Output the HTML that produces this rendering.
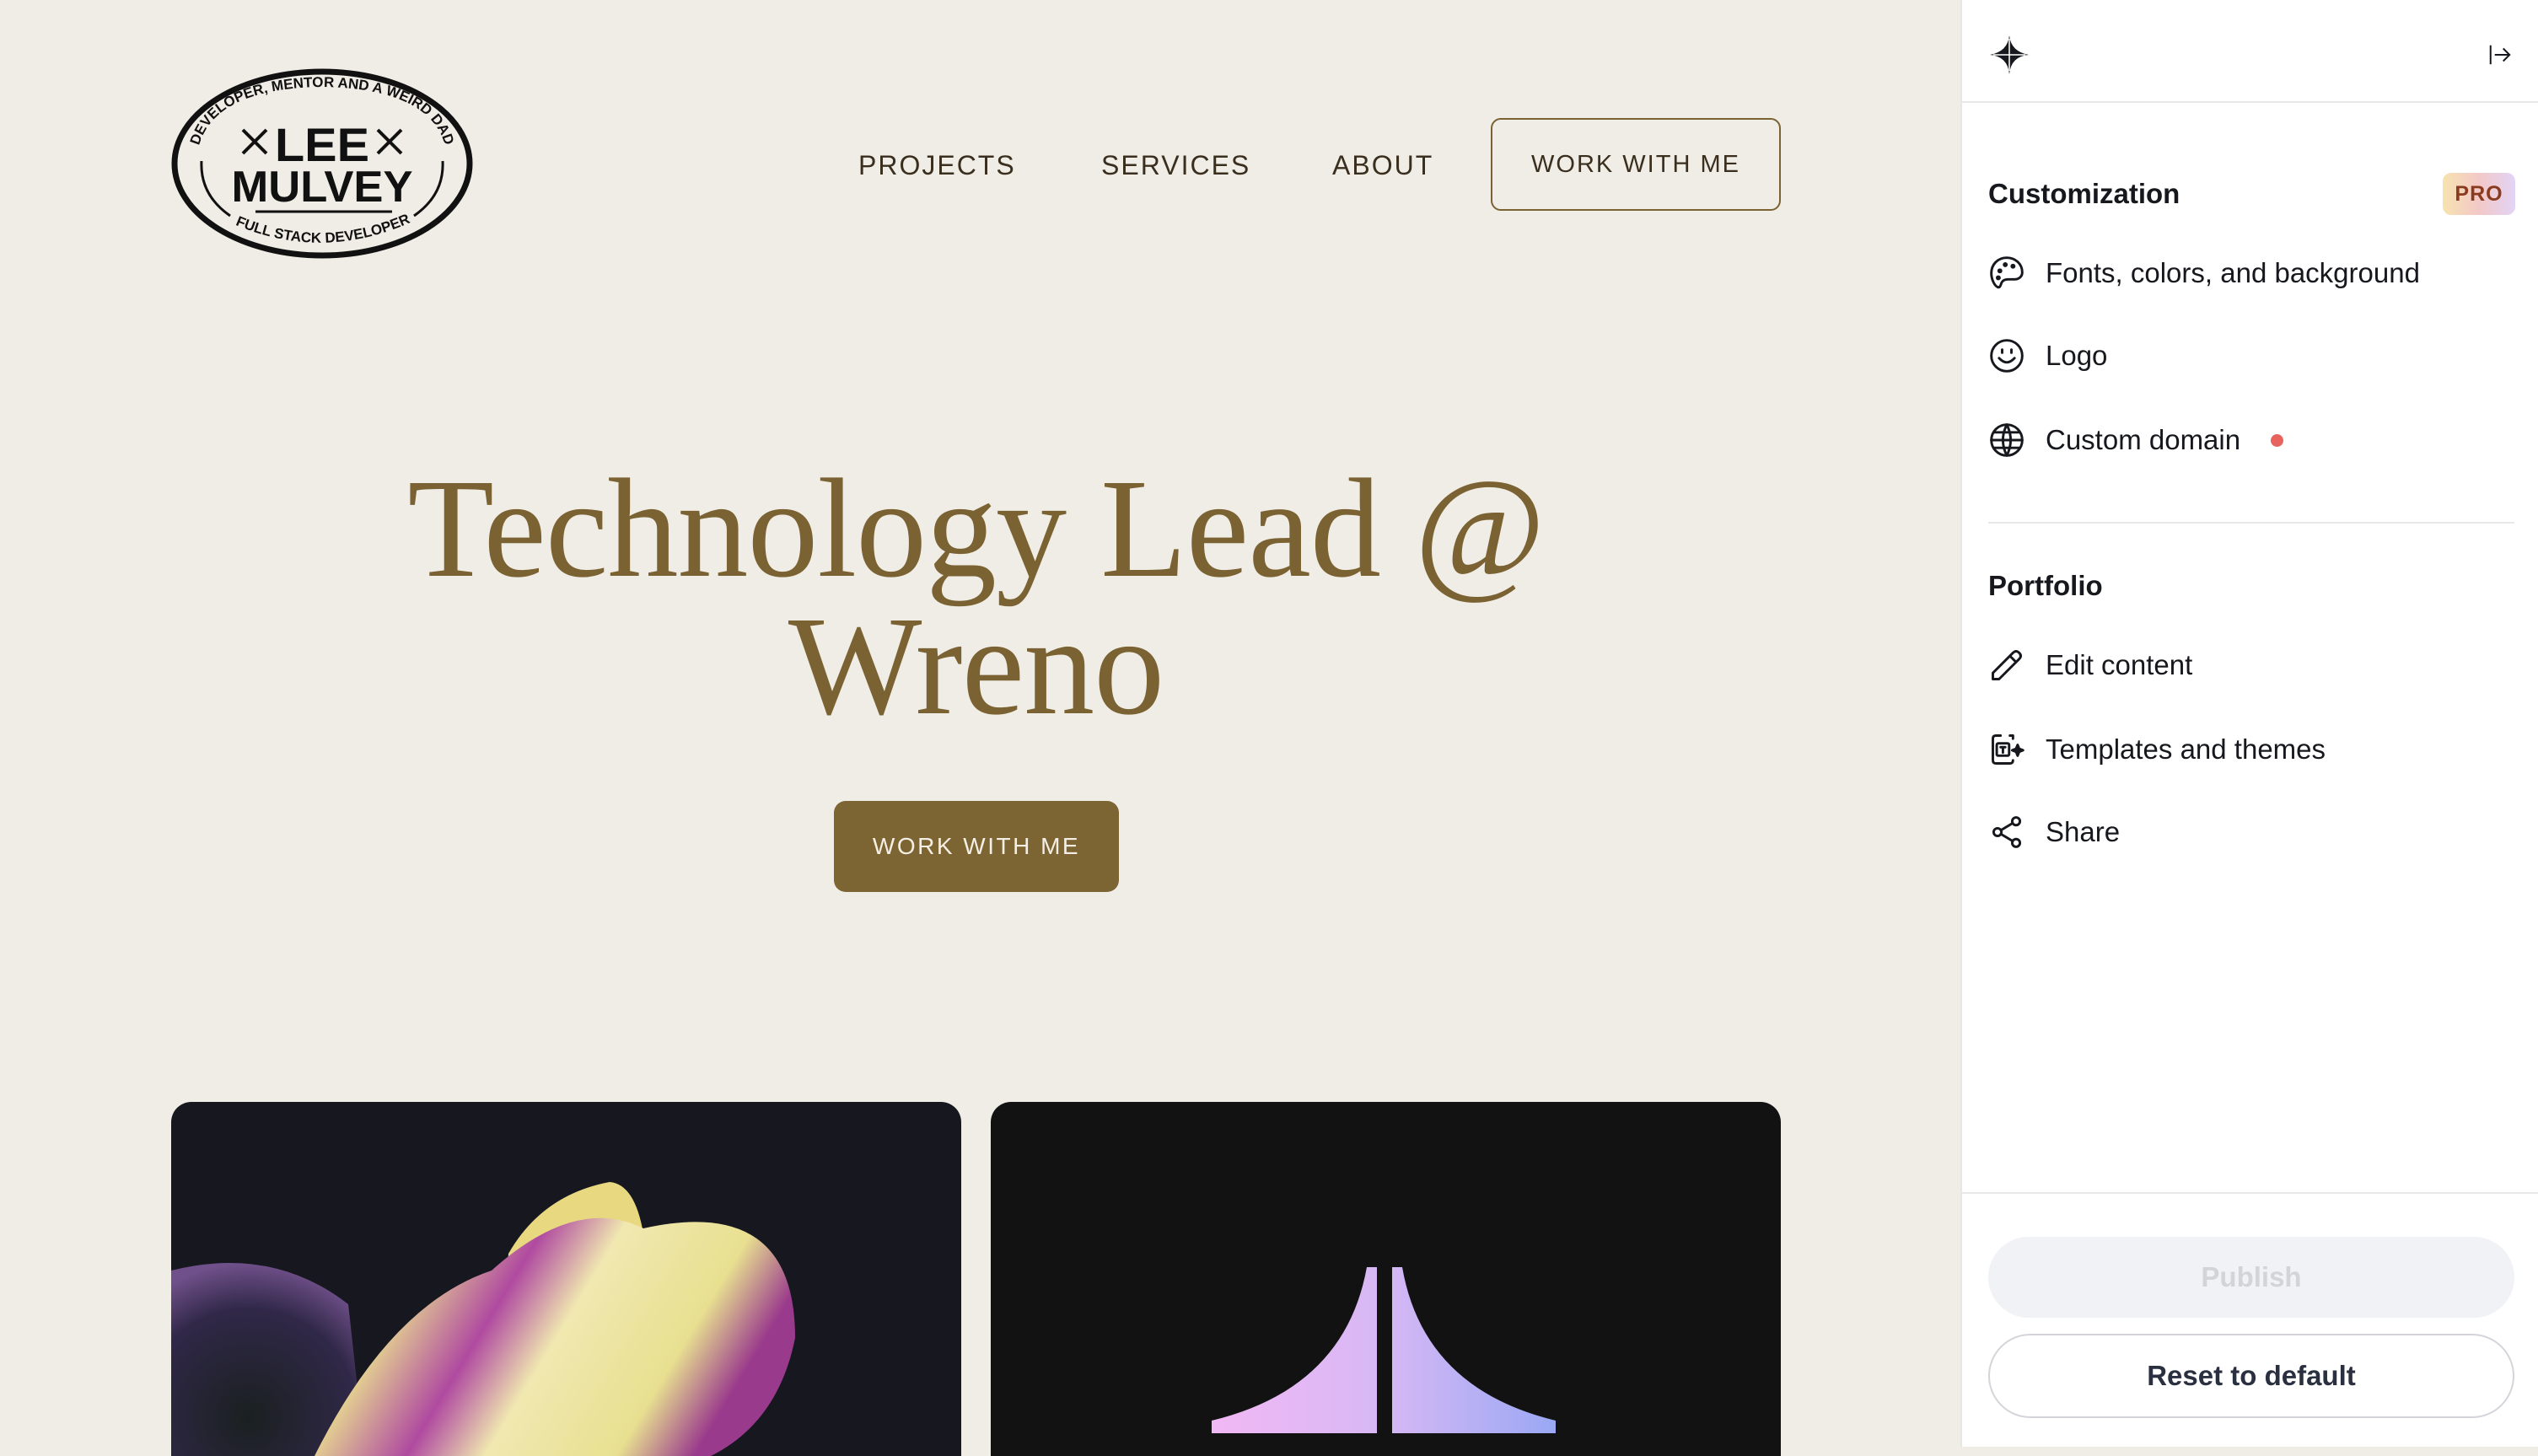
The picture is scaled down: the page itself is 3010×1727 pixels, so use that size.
<!DOCTYPE html>
<html><head><meta charset="utf-8"><style>
*{margin:0;padding:0;box-sizing:border-box}
body{width:3010px;height:1716px;overflow:hidden;position:relative;background:#f0ede6;font-family:"Liberation Sans",sans-serif}
.main{position:absolute;left:0;top:0;width:2325px;height:1716px;background:#f0ede6}
.nav{position:absolute;top:178px;font-size:32px;letter-spacing:2px;color:#3a2f1e}
.wbtn{position:absolute;left:1768px;top:140px;width:344px;height:110px;border:2px solid #7a6232;border-radius:12px;display:flex;align-items:center;justify-content:center;font-size:29px;letter-spacing:2px;color:#3a2f1e}
h1{position:absolute;left:203px;width:1909px;top:546px;text-align:center;font-family:"Liberation Serif",serif;font-weight:400;font-size:168px;line-height:163px;color:#7b6232;letter-spacing:-1px}
.cta{position:absolute;left:989px;top:950px;width:338px;height:108px;background:#7d6433;border-radius:14px;color:#f4efe4;font-size:28px;letter-spacing:2.5px;display:flex;align-items:center;justify-content:center}
.card{position:absolute;top:1307px;height:420px;border-radius:24px 24px 0 0;overflow:hidden}
.side{position:absolute;left:2325px;top:0;width:685px;height:1716px;background:#fff;border-left:2px solid #e6e6e6}
.hd{position:absolute;left:0;top:0;width:100%;height:122px;border-bottom:2px solid #e6e8ea}
.sec{position:absolute;left:31px;font-size:33px;font-weight:700;color:#16181d}
.it{position:absolute;left:31px;display:flex;align-items:center;font-size:33px;color:#16181d}
.it svg{width:44px;height:44px;margin-right:24px;fill:none;stroke:#16181d;stroke-width:1.6;stroke-linecap:round;stroke-linejoin:round}
.btn{position:absolute;left:31px;width:624px;border-radius:60px;display:flex;align-items:center;justify-content:center;font-size:33px;font-weight:700}
</style></head><body>
<div class="main">
<svg style="position:absolute;left:203px;top:81px" width="358" height="226" viewBox="0 0 358 226">
<defs>
<path id="top" d="M30 110 Q36 24 179 22 Q322 24 328 110"/>
<path id="bot" d="M70 183 Q179 232 290 180"/>
</defs>
<ellipse cx="179" cy="113" rx="175" ry="109" fill="none" stroke="#111" stroke-width="7"/>
<path d="M36 110 Q34 150 70 175" fill="none" stroke="#111" stroke-width="3"/>
<path d="M322 110 Q324 150 288 175" fill="none" stroke="#111" stroke-width="3"/>
<text font-family="Liberation Sans" font-weight="700" font-size="17" fill="#111"><textPath href="#top" startOffset="50%" text-anchor="middle">DEVELOPER, MENTOR AND A WEIRD DAD</textPath></text>
<text x="179" y="110" font-family="Liberation Sans" font-weight="700" font-size="56" text-anchor="middle" fill="#111" textLength="112" lengthAdjust="spacingAndGlyphs">LEE</text>
<path d="M85 73L113 101M113 73L85 101M245 73L273 101M273 73L245 101" stroke="#111" stroke-width="4"/>
<text x="179" y="158" font-family="Liberation Sans" font-weight="700" font-size="52" text-anchor="middle" fill="#111" textLength="215" lengthAdjust="spacingAndGlyphs">MULVEY</text>
<line x1="100" y1="170" x2="262" y2="170" stroke="#111" stroke-width="3"/>
<text font-family="Liberation Sans" font-weight="700" font-size="17" fill="#111"><textPath href="#bot" startOffset="50%" text-anchor="middle">FULL STACK DEVELOPER</textPath></text>
</svg>
<div class="nav" style="left:1018px">PROJECTS</div>
<div class="nav" style="left:1306px">SERVICES</div>
<div class="nav" style="left:1580px">ABOUT</div>
<div class="wbtn">WORK WITH ME</div>
<h1>Technology Lead @<br>Wreno</h1>
<div class="cta">WORK WITH ME</div>
<div class="card" style="left:203px;width:937px;background:#171720">
<svg width="937" height="420" viewBox="0 0 937 420"><defs>
<linearGradient id="g1" x1="0" y1="0" x2="1" y2="0.3"><stop offset="0" stop-color="#3a2a5a"/><stop offset="0.25" stop-color="#e8dc90"/><stop offset="0.45" stop-color="#b04aa0"/><stop offset="0.6" stop-color="#f0e8b0"/><stop offset="0.85" stop-color="#e8e090"/><stop offset="1" stop-color="#9a3a8c"/></linearGradient>
<radialGradient id="g2" cx="0.4" cy="0.8" r="0.8"><stop offset="0" stop-color="#1a2020"/><stop offset="0.7" stop-color="#302848"/><stop offset="1" stop-color="#70508a"/></radialGradient></defs>
<path d="M0 200 Q120 170 210 240 L230 420 L0 420Z" fill="url(#g2)"/>
<path d="M390 310 L400 180 Q440 110 520 95 Q580 100 560 330 Z" fill="#e8d880"/>
<path d="M170 420 Q260 240 380 200 Q480 110 560 150 Q740 110 740 280 Q720 380 640 420Z" fill="url(#g1)"/>
</svg></div>
<div class="card" style="left:1175px;width:937px;background:#121212">
<svg width="937" height="420" viewBox="0 0 937 420"><defs><linearGradient id="g3" gradientUnits="userSpaceOnUse" x1="270" y1="0" x2="670" y2="0"><stop offset="0" stop-color="#f0b8f4"/><stop offset="0.5" stop-color="#d6b8f4"/><stop offset="1" stop-color="#9aa8f4"/></linearGradient></defs>
<path d="M446 196 L458 196 L458 393 L262 393 L262 378 Q420 340 446 196Z" fill="url(#g3)"/>
<path d="M476 196 L488 196 Q513 340 670 378 L670 393 L476 393Z" fill="url(#g3)"/>
</svg></div>
</div>
<div class="side">
<div class="hd">
<svg style="position:absolute;left:33px;top:42px" width="46" height="46" viewBox="0 0 24 24"><path d="M12 0 Q13 10 24 12 Q13 13 12 24 Q11 13 0 12 Q11 10 12 0Z" fill="#16181d"/><path d="M12 2V22M2 12H22" stroke="#fff" stroke-width="0.8"/></svg>
<svg style="position:absolute;left:623px;top:50px" width="30" height="30" viewBox="0 0 24 24" fill="none" stroke="#16181d" stroke-width="1.6"><path d="M3 3V21M7 12H21M15 6L21 12L15 18"/></svg>
</div>
<div class="sec" style="top:211px">Customization</div>
<div style="position:absolute;left:570px;top:205px;width:86px;height:50px;border-radius:10px;background:linear-gradient(90deg,#f6e3b0,#f3c8c8,#e2d4f6);color:#8a3a1e;font-size:25px;font-weight:700;letter-spacing:1px;display:flex;align-items:center;justify-content:center">PRO</div>
<div class="it" style="top:302px"><svg viewBox="0 0 24 24"><path d="M12 2C6 2 2 6.5 2 12c0 4 2 8 4 9 1.5.7 2-1 2.5-2.5.8-2 2.5-2.5 4.5-2.5h4c3 0 5-2 5-4.5C22 6 17.5 2 12 2Z"/><circle cx="7.5" cy="10.5" r=".8" fill="#16181d"/><circle cx="11" cy="6.5" r=".8" fill="#16181d"/><circle cx="16" cy="7.5" r=".8" fill="#16181d"/><circle cx="6.5" cy="15" r=".8" fill="#16181d"/></svg>Fonts, colors, and background</div>
<div class="it" style="top:400px"><svg viewBox="0 0 24 24"><circle cx="12" cy="12" r="10"/><path d="M9 8V10M15 8V10M7 13.5Q12 19 17 13.5"/></svg>Logo</div>
<div class="it" style="top:500px"><svg viewBox="0 0 24 24"><circle cx="12" cy="12" r="10"/><path d="M2 12H22M12 2Q7 12 12 22Q17 12 12 2M4 7H20M4 17H20"/></svg>Custom domain<span style="display:inline-block;width:15px;height:15px;border-radius:50%;background:#e8625e;margin-left:36px"></span></div>
<div style="position:absolute;left:31px;top:619px;width:624px;height:2px;background:#e6e8ea"></div>
<div class="sec" style="top:676px">Portfolio</div>
<div class="it" style="top:767px"><svg viewBox="0 0 24 24"><path d="M3 21L3 17L16 4Q18 2 20 4Q22 6 20 8L7 21Z M14 6L18 10"/></svg>Edit content</div>
<div class="it" style="top:867px"><svg viewBox="0 0 24 24"><path d="M8 3H5Q3 3 3 5V19Q3 21 5 21H14Q16 21 16 19M14 3H16V5"/><rect x="5.5" y="8" width="8" height="8" rx="1"/><path d="M8 10.5H11M9.5 10.5V14"/><path d="M19 9L20 11.5L22.5 12.5L20 13.5L19 16L18 13.5L15.5 12.5L18 11.5Z" fill="#16181d"/></svg>Templates and themes</div>
<div class="it" style="top:965px"><svg viewBox="0 0 24 24"><circle cx="18" cy="5" r="2.5"/><circle cx="6" cy="12" r="2.5"/><circle cx="18" cy="19" r="2.5"/><path d="M8.2 10.8L15.8 6.2M8.2 13.2L15.8 17.8"/></svg>Share</div>
<div style="position:absolute;left:0;top:1414px;width:100%;height:2px;background:#e6e8ea"></div>
<div class="btn" style="top:1467px;height:96px;background:#f1f2f5;color:#d2d4da">Publish</div>
<div class="btn" style="top:1582px;height:100px;border:2px solid #d4d5da;color:#2a3040">Reset to default</div>
</div>
</body></html>
